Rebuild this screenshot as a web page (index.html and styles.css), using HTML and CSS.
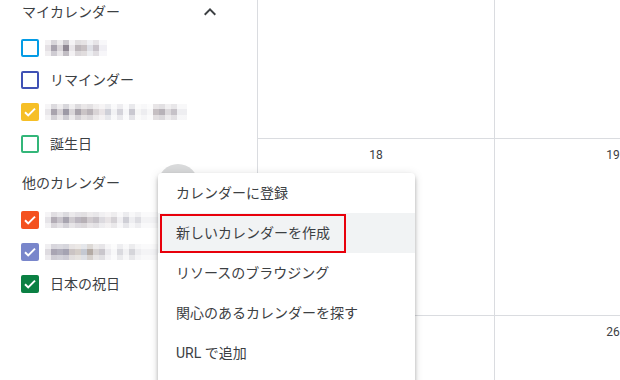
FILE: index.html
```html
<!DOCTYPE html>
<html lang="ja">
<head>
<meta charset="utf-8">
<link rel="stylesheet" href="styles.css">
</head>
<body>
<div class="app">
  <aside class="sidebar">
    <div class="sec-head">
      <span>マイカレンダー</span>
      <svg class="chev" width="24" height="24" viewBox="0 0 24 24"><path d="M12 8l-6 6 1.41 1.41L12 10.83l4.59 4.58L18 14z" fill="#3c4043"/></svg>
    </div>
    <ul class="cal-list first">
      <li><span class="cb outline c-blue"></span><span class="blur blur1"></span></li>
      <li><span class="cb outline c-indigo"></span><span class="label">リマインダー</span></li>
      <li><span class="cb filled c-yellow"><svg viewBox="0 0 18 18"><path d="M4 9.2l3.2 3.2L14 5.6" fill="none" stroke="#fff" stroke-width="2"/></svg></span><span class="blur blur2"></span></li>
      <li><span class="cb outline c-sage"></span><span class="label">誕生日</span></li>
    </ul>
    <div class="sec-head second"><span>他のカレンダー</span></div>
    <ul class="cal-list">
      <li><span class="cb filled c-tangerine"><svg viewBox="0 0 18 18"><path d="M4 9.2l3.2 3.2L14 5.6" fill="none" stroke="#fff" stroke-width="2"/></svg></span><span class="blur blur3"></span></li>
      <li><span class="cb filled c-lavender"><svg viewBox="0 0 18 18"><path d="M4 9.2l3.2 3.2L14 5.6" fill="none" stroke="#fff" stroke-width="2"/></svg></span><span class="blur blur4"></span></li>
      <li><span class="cb filled c-basil"><svg viewBox="0 0 18 18"><path d="M4 9.2l3.2 3.2L14 5.6" fill="none" stroke="#fff" stroke-width="2"/></svg></span><span class="label">日本の祝日</span></li>
    </ul>
  </aside>
  <main class="grid">
    <div class="cell"></div>
    <div class="cell"></div>
    <div class="cell"><div class="day">18</div></div>
    <div class="cell"><div class="day">19</div></div>
    <div class="cell"><div class="day">25</div></div>
    <div class="cell"><div class="day">26</div></div>
  </main>
  <div class="hover-circle"></div>
  <div class="menu">
    <div class="item">カレンダーに登録</div>
    <div class="item active">新しいカレンダーを作成<span class="redbox"></span></div>
    <div class="item">リソースのブラウジング</div>
    <div class="item">関心のあるカレンダーを探す</div>
    <div class="item">URL で追加</div>
  </div>
</div>
</body>
</html>
```

FILE: styles.css
```css
* { box-sizing: border-box; }
html, body { margin: 0; padding: 0; }
body {
  width: 620px;
  height: 380px;
  overflow: hidden;
  background: #fff;
  font-family: Roboto, "Noto Sans CJK JP", sans-serif;
  color: #3c4043;
  font-size: 14px;
}
.app {
  position: relative;
  display: flex;
  width: 620px;
  height: 380px;
  overflow: hidden;
}
.sidebar {
  width: 257px;
  flex: none;
  padding-left: 21px;
}
.sec-head {
  height: 24px;
  display: flex;
  align-items: center;
  padding-left: 1px;
  line-height: 24px;
  font-size: 14px;
  color: #3c4043;
}
.sec-head.second { margin-top: 11px; }
.chev { margin-left: auto; margin-right: 35px; }
.cal-list {
  list-style: none;
  margin: 8px 0 0;
  padding: 0;
}
.cal-list li {
  height: 32px;
  display: flex;
  align-items: center;
}
.cal-list:not(.first) { margin-top: 9px; }
.cb {
  width: 18px;
  height: 18px;
  border-radius: 2px;
  flex: none;
  display: flex;
}
.cb svg { width: 18px; height: 18px; }
.cb.outline { border-width: 2px; border-style: solid; background: #fff; }
.cb.c-blue { border-color: #039be5; }
.cb.c-indigo { border-color: #3f51b5; }
.cb.c-sage { border-color: #33b679; }
.cb.c-yellow { background: #f6bf26; }
.cb.c-tangerine { background: #f4511e; }
.cb.c-lavender { background: #7986cb; }
.cb.c-basil { background: #0b8043; }
.label {
  margin-left: 11px;
  line-height: 20px;
  color: #3c4043;
}
.blur {
  display: block;
  height: 16px;
  margin-left: 6px;
}
.blur1 {
  width: 62px;
  background:
    linear-gradient(to bottom, rgba(255,255,255,.55) 0 5px, rgba(255,255,255,0) 5px 11px, rgba(255,255,255,.45) 11px),
    linear-gradient(to right, #e4e0e4 0 6px, #a8a3ae 6px 12px, #d8d4d8 12px 18px, #8f8893 18px 24px, #e9e6e9 24px 30px, #bdb7bb 30px 36px, #c8c1c3 36px 42px, #dfe0e6 42px 48px, #c8c3ca 48px 54px, #f0eff4 54px 62px);
}
.blur2 {
  width: 142px;
  background:
    linear-gradient(to bottom, rgba(255,255,255,.6) 0 5px, rgba(255,255,255,0) 5px 11px, rgba(255,255,255,.5) 11px),
    linear-gradient(to right, #e9e7ea 0 6px, #a9a4ae 6px 12px, #d6d2d6 12px 18px, #9d9aa6 18px 24px, #d9d6d9 24px 30px, #a8a3ab 30px 36px, #cac4c6 36px 42px, #b9b3b8 42px 48px, #d9d4d6 48px 54px, #e9e4e6 54px 60px, #cfd0d8 60px 66px, #f2f2f4 66px 72px, #d4d3da 72px 78px, #f6f6f8 78px 84px, #c9c8d0 84px 90px, #f6f6f6 90px 96px, #ededf0 96px 102px, #f7f7f8 102px 108px, #c5bfc2 108px 114px, #b7b2b8 114px 120px, #dcd9dc 120px 126px, #c6c2c8 126px 132px, #eeeef1 132px 142px);
}
.blur3 {
  width: 114px;
  background:
    linear-gradient(to bottom, rgba(255,255,255,.6) 0 5px, rgba(255,255,255,0) 5px 11px, rgba(255,255,255,.5) 11px),
    linear-gradient(to right, #e6e4e8 0 6px, #b3adb6 6px 12px, #c9c5cc 12px 18px, #a8a5b0 18px 24px, #cfcbd0 24px 30px, #bcb7c0 30px 36px, #b7b1b6 36px 42px, #d1ccd0 42px 48px, #c6c2c8 48px 54px, #dcdadf 54px 60px, #e8e4e6 60px 66px, #d5d2d6 66px 72px, #f0eff2 72px 78px, #cfcfd6 78px 84px, #eeeef1 84px 90px, #dddde2 90px 96px, #f3f3f5 96px 114px);
}
.blur4 {
  width: 114px;
  background:
    linear-gradient(to bottom, rgba(255,255,255,.55) 0 5px, rgba(255,255,255,0) 5px 11px, rgba(255,255,255,.45) 11px),
    linear-gradient(to right, #dedbe0 0 6px, #a9a5b3 6px 12px, #b0aebb 12px 18px, #a5a3b2 18px 24px, #cbc4c4 24px 30px, #d4cdc8 30px 36px, #c5c9d2 36px 42px, #b4aba5 42px 48px, #d6d2d2 48px 54px, #c9c6cc 54px 60px, #ebeaee 60px 66px, #f8f8f9 66px 72px, #dadadf 72px 78px, #f1f1f3 78px 84px, #d5d5da 84px 90px, #ededf0 90px 96px, #f4f4f6 96px 114px);
}
.grid {
  flex: none;
  width: 480px;
  border-left: 1px solid #dadce0;
  display: grid;
  grid-template-columns: 237px 237px;
  grid-template-rows: 139px 177px 80px;
}
.cell {
  border-right: 1px solid #dadce0;
  border-bottom: 1px solid #dadce0;
  display: flex;
  justify-content: center;
}
.day {
  margin-top: 4px;
  height: 24px;
  line-height: 24px;
  font-size: 12px;
  color: #3c4043;
}
.hover-circle {
  position: absolute;
  left: 158px;
  top: 164px;
  width: 40px;
  height: 40px;
  border-radius: 50%;
  background: #d9dadb;
}
.menu {
  position: absolute;
  left: 158px;
  top: 173px;
  width: 257px;
  height: 230px;
  background: #fff;
  border-radius: 4px;
  box-shadow: 0 4px 5px 0 rgba(0,0,0,.14), 0 1px 10px 0 rgba(0,0,0,.12), 0 2px 4px -1px rgba(0,0,0,.2);
}
.item {
  position: relative;
  height: 40px;
  line-height: 40px;
  padding-left: 18px;
  font-size: 14px;
  color: #3c4043;
}
.item.active { background: #f1f3f4; }
.redbox {
  position: absolute;
  left: 2px;
  top: 1px;
  width: 186px;
  height: 39px;
  border: 2px solid #e8000b;
}
```
